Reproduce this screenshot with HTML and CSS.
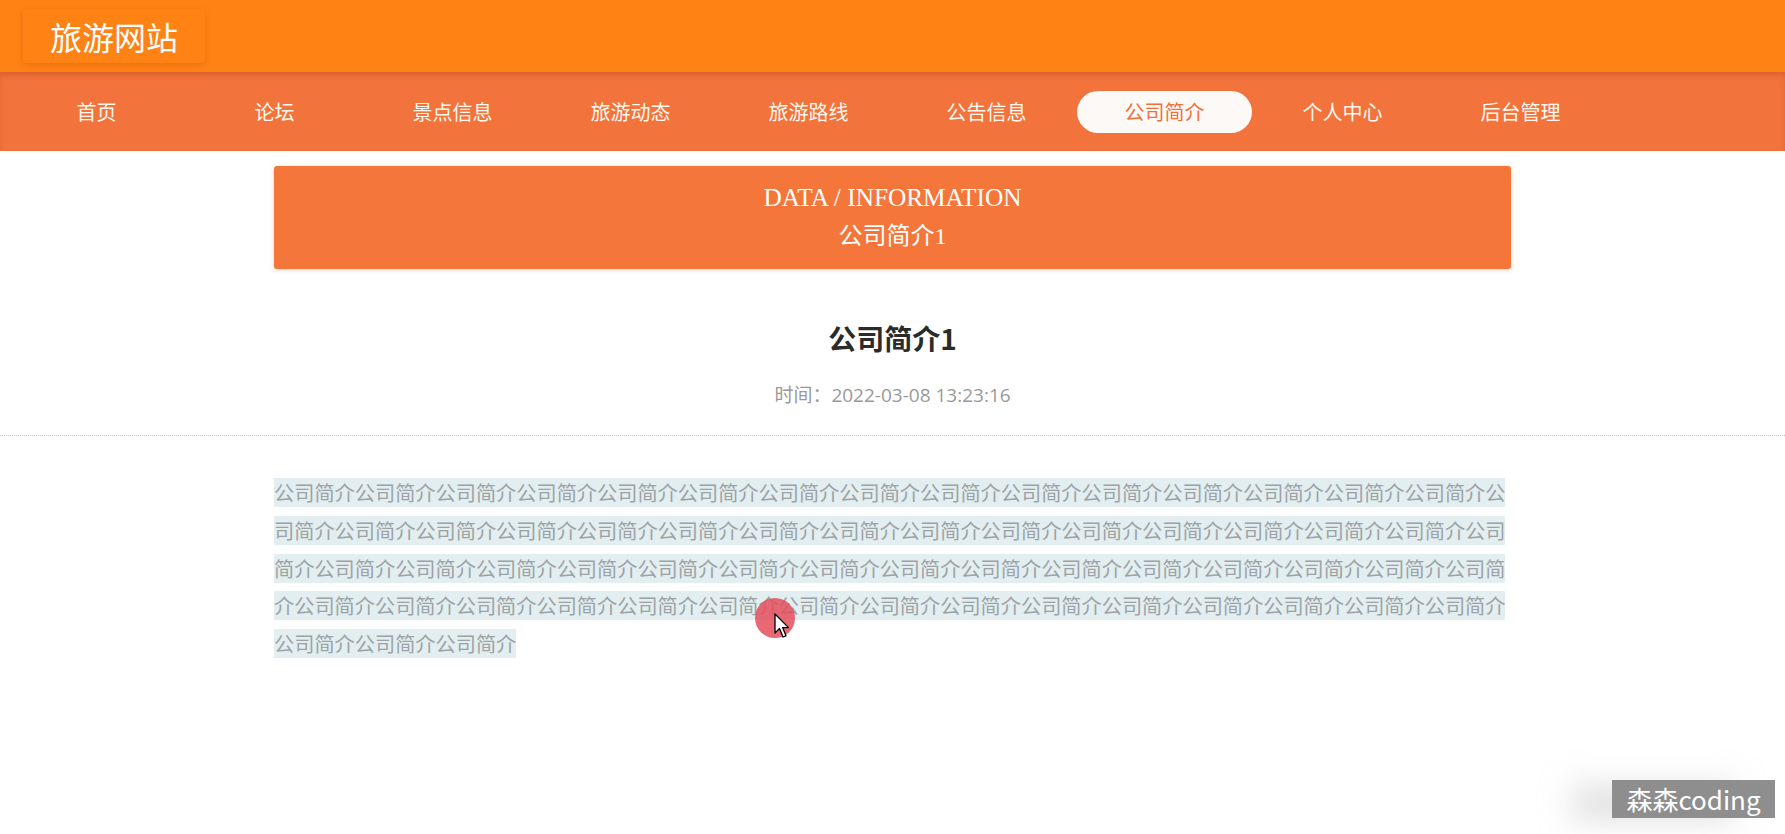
FILE: index.html
```html
<!DOCTYPE html>
<html lang="zh-CN">
<head>
<meta charset="utf-8">
<title>旅游网站 - 公司简介</title>
<link rel="stylesheet" href="styles.css">
</head>
<body>
<header class="header">
  <div class="logo">旅游网站</div>
</header>
<nav class="nav">
  <a class="nav-item">首页</a>
  <a class="nav-item">论坛</a>
  <a class="nav-item">景点信息</a>
  <a class="nav-item">旅游动态</a>
  <a class="nav-item">旅游路线</a>
  <a class="nav-item">公告信息</a>
  <a class="nav-item active">公司简介</a>
  <a class="nav-item">个人中心</a>
  <a class="nav-item">后台管理</a>
</nav>
<main class="main">
  <section class="banner">
    <div class="banner-en">DATA / INFORMATION</div>
    <div class="banner-cn">公司简介1</div>
  </section>
  <h1 class="title">公司简介1</h1>
  <div class="time">时间：2022-03-08 13:23:16</div>
  <div class="divider"></div>
  <div class="content"><span class="sel">公司简介公司简介公司简介公司简介公司简介公司简介公司简介公司简介公司简介公司简介公司简介公司简介公司简介公司简介公司简介公司简介公司简介公司简介公司简介公司简介公司简介公司简介公司简介公司简介公司简介公司简介公司简介公司简介公司简介公司简介公司简介公司简介公司简介公司简介公司简介公司简介公司简介公司简介公司简介公司简介公司简介公司简介公司简介公司简介公司简介公司简介公司简介公司简介公司简介公司简介公司简介公司简介公司简介公司简介公司简介公司简介公司简介公司简介公司简介公司简介公司简介公司简介公司简介公司简介</span></div>
</main>
<div class="click-dot"></div>
<svg class="cursor" width="16" height="26" viewBox="0 0 16 26"><path d="M1 1 L1 20 L5.5 15.5 L9 24 L12 22.8 L8.6 14.6 L14.5 14.6 Z" fill="#fff" stroke="#000" stroke-width="1.3" stroke-linejoin="round"/></svg>
<div class="watermark">森森coding</div>
</body>
</html>
```

FILE: styles.css
```css
* { box-sizing: border-box; }
html, body { margin: 0; padding: 0; }
body {
  width: 1785px;
  height: 834px;
  overflow: hidden;
  background: #fff;
  font-family: "Noto Sans CJK SC", "Noto Sans", sans-serif;
  position: relative;
}
.header {
  height: 72px;
  background: #ff8314;
  display: flex;
  align-items: center;
  padding-left: 23px;
}
.logo {
  width: 182px;
  height: 54px;
  display: flex;
  align-items: center;
  justify-content: center;
  color: #fff;
  font-size: 32px;
  border-radius: 4px;
  box-shadow: 0 2px 6px rgba(190, 80, 0, 0.35);
  background: #ff8314;
}
.nav {
  height: 79px;
  background: linear-gradient(#ec6c36, #f2733b 12%, #f2733b);
  display: flex;
  align-items: center;
  padding-left: 9px;
  gap: 3px;
  box-shadow: inset 0 3px 4px rgba(180, 70, 20, 0.25);
}
.nav-item {
  width: 175px;
  height: 42px;
  display: flex;
  align-items: center;
  justify-content: center;
  color: #fff8ee;
  font-size: 20px;
  border-radius: 21px;
}
.nav-item.active {
  background: #fdf9f7;
  color: #f0703a;
}
.main {
  display: flex;
  flex-direction: column;
  align-items: center;
}
.banner {
  width: 1237px;
  height: 103px;
  margin-top: 15px;
  padding-top: 12px;
  background: #f5763a;
  border-radius: 3px;
  box-shadow: 0 1px 4px rgba(200, 120, 80, 0.35);
  color: #fff;
  text-align: center;
  font-family: "Liberation Serif", "Noto Sans CJK SC", serif;
  font-size: 24px;
  line-height: 39px;
}
.banner-en {
  font-size: 25.3px;
}
.title {
  margin: 49px 0 0;
  font-size: 28px;
  line-height: 40px;
  font-weight: 700;
  color: #2b2b2b;
}
.time {
  margin-top: 24px;
  font-family: "Open Sans", "Noto Sans CJK SC", sans-serif;
  font-size: 19px;
  line-height: 26px;
  color: #999;
}
.divider {
  align-self: stretch;
  margin-top: 27px;
  border-top: 1px dotted #c9c0c4;
}
.content {
  width: 1237px;
  margin-top: 38px;
  font-size: 20.2px;
  line-height: 37.75px;
  color: #9ca2a6;
  word-break: break-all;
}
.sel {
  background: #e2eeef;
}
.click-dot {
  position: absolute;
  left: 755px;
  top: 598px;
  width: 40px;
  height: 40px;
  border-radius: 50%;
  background: rgba(228, 78, 92, 0.85);
}
.cursor {
  position: absolute;
  left: 774px;
  top: 613px;
}
.watermark {
  position: absolute;
  left: 1612px;
  top: 780px;
  width: 163px;
  height: 38px;
  background: #8e8e8e;
  color: #fff;
  font-size: 26px;
  line-height: 38px;
  text-align: center;
  box-shadow: -40px 4px 30px rgba(200, 200, 200, 0.5);
}
```
